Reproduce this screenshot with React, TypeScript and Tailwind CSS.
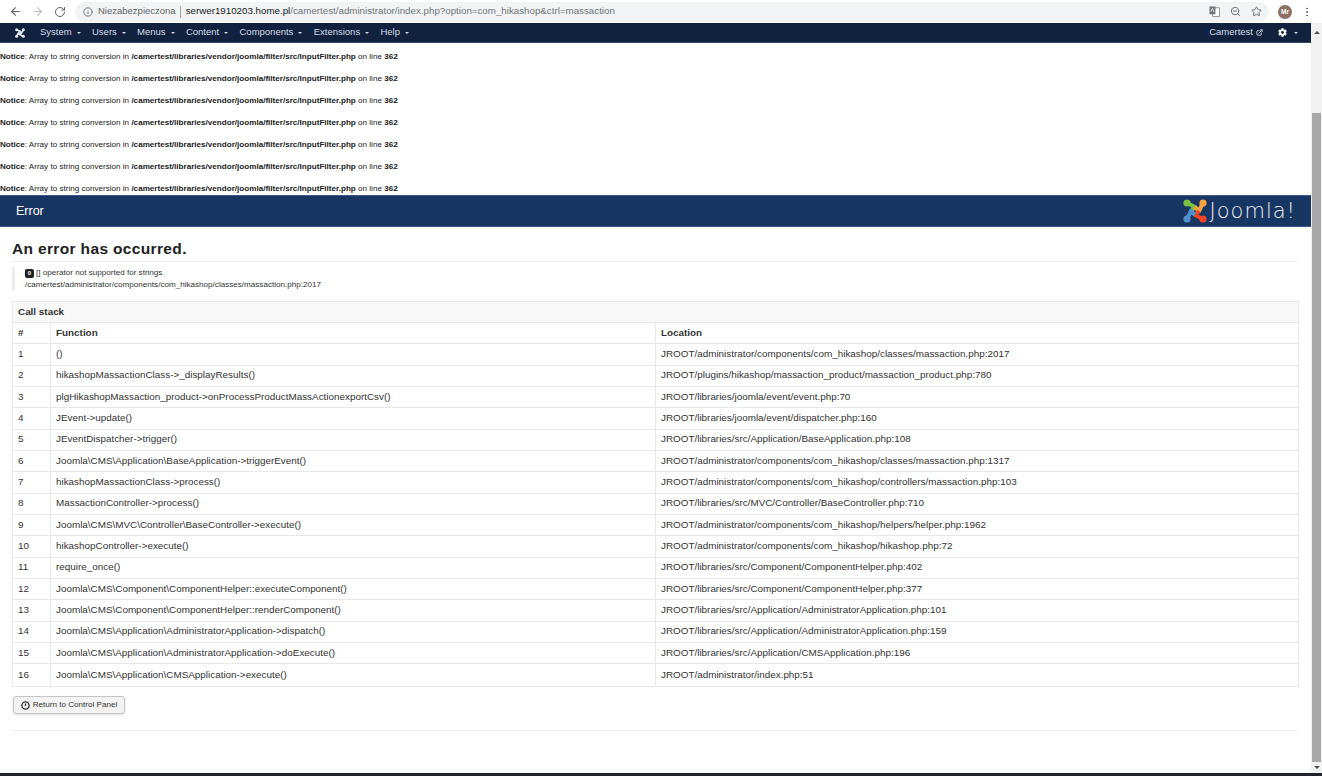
import React from 'react';
import { ArrowLeft, ArrowRight, RotateCw, Info, ZoomOut, Star, MoreVertical, ExternalLink } from 'lucide-react';
import { FaCog } from 'react-icons/fa';

const menus = ['System', 'Users', 'Menus', 'Content', 'Components', 'Extensions', 'Help'];

const stack: [string, string][] = [
  ['()', 'JROOT/administrator/components/com_hikashop/classes/massaction.php:2017'],
  ['hikashopMassactionClass->_displayResults()', 'JROOT/plugins/hikashop/massaction_product/massaction_product.php:780'],
  ['plgHikashopMassaction_product->onProcessProductMassActionexportCsv()', 'JROOT/libraries/joomla/event/event.php:70'],
  ['JEvent->update()', 'JROOT/libraries/joomla/event/dispatcher.php:160'],
  ['JEventDispatcher->trigger()', 'JROOT/libraries/src/Application/BaseApplication.php:108'],
  ['Joomla\\CMS\\Application\\BaseApplication->triggerEvent()', 'JROOT/administrator/components/com_hikashop/classes/massaction.php:1317'],
  ['hikashopMassactionClass->process()', 'JROOT/administrator/components/com_hikashop/controllers/massaction.php:103'],
  ['MassactionController->process()', 'JROOT/libraries/src/MVC/Controller/BaseController.php:710'],
  ['Joomla\\CMS\\MVC\\Controller\\BaseController->execute()', 'JROOT/administrator/components/com_hikashop/helpers/helper.php:1962'],
  ['hikashopController->execute()', 'JROOT/administrator/components/com_hikashop/hikashop.php:72'],
  ['require_once()', 'JROOT/libraries/src/Component/ComponentHelper.php:402'],
  ['Joomla\\CMS\\Component\\ComponentHelper::executeComponent()', 'JROOT/libraries/src/Component/ComponentHelper.php:377'],
  ['Joomla\\CMS\\Component\\ComponentHelper::renderComponent()', 'JROOT/libraries/src/Application/AdministratorApplication.php:101'],
  ['Joomla\\CMS\\Application\\AdministratorApplication->dispatch()', 'JROOT/libraries/src/Application/AdministratorApplication.php:159'],
  ['Joomla\\CMS\\Application\\AdministratorApplication->doExecute()', 'JROOT/libraries/src/Application/CMSApplication.php:196'],
  ['Joomla\\CMS\\Application\\CMSApplication->execute()', 'JROOT/administrator/index.php:51'],
];

const arms: [string, string, number, number][] = [
  ['M4 4 L12 8 L8 12', '#7ac143', 4, 4],
  ['M20 4 L16 12 L12 8', '#f9a541', 20, 4],
  ['M20 20 L12 16 L16 12', '#f44321', 20, 20],
  ['M4 20 L8 12 L12 16', '#5091cd', 4, 20],
];

// four hooked arms with a ball on the outer end, white in the top bar
const JoomlaMark: React.FC<{ size: number; mono?: boolean }> = ({ size, mono }) => (
  <svg width={size} height={size} viewBox="0 0 24 24" fill="none" strokeWidth="4" strokeLinejoin="round">
    {arms.map(([d, color, cx, cy]) => (
      <g key={d}>
        <path d={d} stroke={mono ? '#e8ecf2' : color} />
        <circle cx={cx} cy={cy} r="3.6" fill={mono ? '#e8ecf2' : color} />
      </g>
    ))}
  </svg>
);

const Caret = () => <span className="ml-[5px] inline-block w-0 h-0 border-x-[2.5px] border-x-transparent border-t-[2.5px] border-t-[#d5dbe4] align-middle" />;

const Notice = () => (
  <div className="h-[22px] flex items-center text-[8.1px] leading-none text-[#222] whitespace-nowrap">
    <span>
      <b>Notice</b>: Array to string conversion in <b>/camertest/libraries/vendor/joomla/filter/src/InputFilter.php</b> on line <b>362</b>
    </span>
  </div>
);

const BrowserBar = () => (
  <div className="h-[23px] bg-white flex items-center text-[#5f6368] shrink-0">
    <ArrowLeft size={13} className="ml-[9px]" />
    <ArrowRight size={13} className="ml-[9px] text-[#b9bcc0]" />
    <RotateCw size={12} className="ml-[10px]" />
    <div className="ml-[9px] w-[1194px] h-[20px] rounded-full bg-[#f1f3f4] flex items-center">
      <Info size={10} className="ml-[8px]" />
      <span className="ml-[5px] text-[9.5px] text-[#5f6368]">Niezabezpieczona</span>
      <span className="ml-[4px] mr-[5px] h-[12px] w-px bg-[#9aa0a6]" />
      <span className="text-[9.75px] text-[#202124]">serwer1910203.home.pl</span>
      <span className="text-[9.75px] text-[#70757a]">/camertest/administrator/index.php?option=com_hikashop&amp;ctrl=massaction</span>
      <div className="ml-auto flex items-center gap-[10px] mr-[7px]">
        <svg width="11" height="11" viewBox="0 0 12 12">
          <rect x="4" y="2" width="7.5" height="9.5" fill="#fff" stroke="#70757a" strokeWidth="0.8" />
          <rect x="0.5" y="0.5" width="6.5" height="8.5" fill="#70757a" />
          <path d="M2 6.5 L3.7 2.5 L5.4 6.5" stroke="#fff" strokeWidth="0.8" fill="none" />
        </svg>
        <ZoomOut size={11} />
        <Star size={11} />
      </div>
    </div>
    <div className="ml-[9px] w-[14px] h-[14px] rounded-full bg-[#8d6e63] text-white text-[6.5px] font-bold flex items-center justify-center">Mr</div>
    <MoreVertical size={12} className="ml-[9px]" />
  </div>
);

const TopNav = () => (
  <div className="h-[20px] bg-[#10223e] border-b border-[#2c4a6e] flex items-center text-[#d5dbe4] text-[9.5px] shrink-0">
    <span className="ml-[15px] mr-[15px] flex"><JoomlaMark size={10} mono /></span>
    {menus.map((m) => (
      <span key={m} className="mr-[11.3px] whitespace-nowrap">{m}<Caret /></span>
    ))}
    <span className="ml-auto flex items-center">
      Camertest
      <ExternalLink size={7} strokeWidth={3} className="ml-[3px]" />
    </span>
    <FaCog size={9} className="ml-[15px] text-white" />
    <span className="mr-[13px] ml-[2px]"><Caret /></span>
  </div>
);

const CallStack = () => (
  <div className="mt-[10px] border border-[#e8e8e8] text-[9.9px] text-[#333]">
    <div className="h-[21px] bg-[#f9f9f9] border-b border-[#e8e8e8] px-[5px] flex items-center font-bold">Call stack</div>
    <div className="h-[21.4px] grid grid-cols-[38px_605px_1fr] border-b border-[#e8e8e8] font-bold">
      <div className="px-[5px] flex items-center border-r border-[#e8e8e8]">#</div>
      <div className="px-[5px] flex items-center border-r border-[#e8e8e8]">Function</div>
      <div className="px-[5px] flex items-center">Location</div>
    </div>
    {stack.map(([fn, loc], i) => (
      <div key={i} className="h-[21.33px] grid grid-cols-[38px_605px_1fr] border-b last:border-b-0 border-[#e8e8e8]">
        <div className="px-[5px] flex items-center border-r border-[#e8e8e8]">{i + 1}</div>
        <div className="px-[5px] flex items-center border-r border-[#e8e8e8] whitespace-nowrap">{fn}</div>
        <div className="px-[5px] flex items-center whitespace-nowrap">{loc}</div>
      </div>
    ))}
  </div>
);

const Scrollbar = () => (
  <div className="w-[11px] bg-[#f1f1f1] flex flex-col items-center shrink-0">
    <div className="h-[18px] flex items-center justify-center">
      <span className="w-0 h-0 border-x-[3px] border-x-transparent border-b-[3px] border-b-[#505050]" />
    </div>
    <div className="w-full h-[72px]" />
    <div className="w-[9px] flex-1 bg-[#a8a8a8]" />
    <div className="h-[11px] flex items-center justify-center">
      <span className="w-0 h-0 border-x-[3px] border-x-transparent border-t-[3px] border-t-[#505050]" />
    </div>
  </div>
);

const App: React.FC = () => {
  return (
    <div className="w-[1322px] h-[776px] overflow-hidden flex flex-col bg-white" style={{ fontFamily: '"Liberation Sans", Arial, sans-serif' }}>
      <BrowserBar />
      <div className="flex-1 flex min-h-0">
        <div className="flex-1 min-w-0">
          <TopNav />
          <div className="pt-[3px] h-[152px] overflow-hidden">
            {Array.from({ length: 7 }).map((_, i) => <Notice key={i} />)}
          </div>
          <div className="h-[32px] bg-[#183663] border-y border-[#3b5a86] flex items-center justify-between pl-[16px] pr-[15px]">
            <span className="text-white text-[12.5px]">Error</span>
            <div className="flex items-center">
              <JoomlaMark size={24} />
              <span className="ml-[3px] text-[#eef1f5] text-[21px] tracking-[1px] font-extralight leading-none" style={{ fontFamily: '"DejaVu Sans", sans-serif' }}>Joomla!</span>
            </div>
          </div>
          <div className="pl-[12px] pr-[12px]">
            <h1 className="mt-[12px] text-[15.5px] leading-[20px] font-bold text-[#222] tracking-[0.35px]">An error has occurred.</h1>
            <div className="mt-[2px] border-t border-[#eee]" />
            <div className="mt-[5px] border-l-[3px] border-[#eee] pl-[10px] text-[8.1px] leading-[12px] text-[#333]">
              <div className="flex items-center">
                <span className="w-[9px] h-[9px] rounded-[2px] bg-[#222] text-white text-[6px] font-bold flex items-center justify-center mr-[2px]">0</span>
                [] operator not supported for strings
              </div>
              <div>/camertest/administrator/components/com_hikashop/classes/massaction.php:2017</div>
            </div>
            <CallStack />
            <button className="mt-[9.5px] ml-px h-[18px] w-[112px] bg-[#f3f3f3] border border-[#c4c4c4] rounded-[3px] shadow-sm flex items-center justify-center text-[8.1px] text-[#333]">
              <svg width="9" height="9" viewBox="0 0 10 10" className="mr-[3px]" fill="none" stroke="#333">
                <circle cx="5" cy="5" r="4" strokeWidth="1.5" />
                <path d="M5 2.8 L5 5.4" strokeWidth="1.5" />
              </svg>
              Return to Control Panel
            </button>
            <div className="mt-[16px] border-t border-[#eee]" />
          </div>
        </div>
        <Scrollbar />
      </div>
      <div className="h-[3px] bg-[#20242c] shrink-0" />
    </div>
  );
};

export default App;
